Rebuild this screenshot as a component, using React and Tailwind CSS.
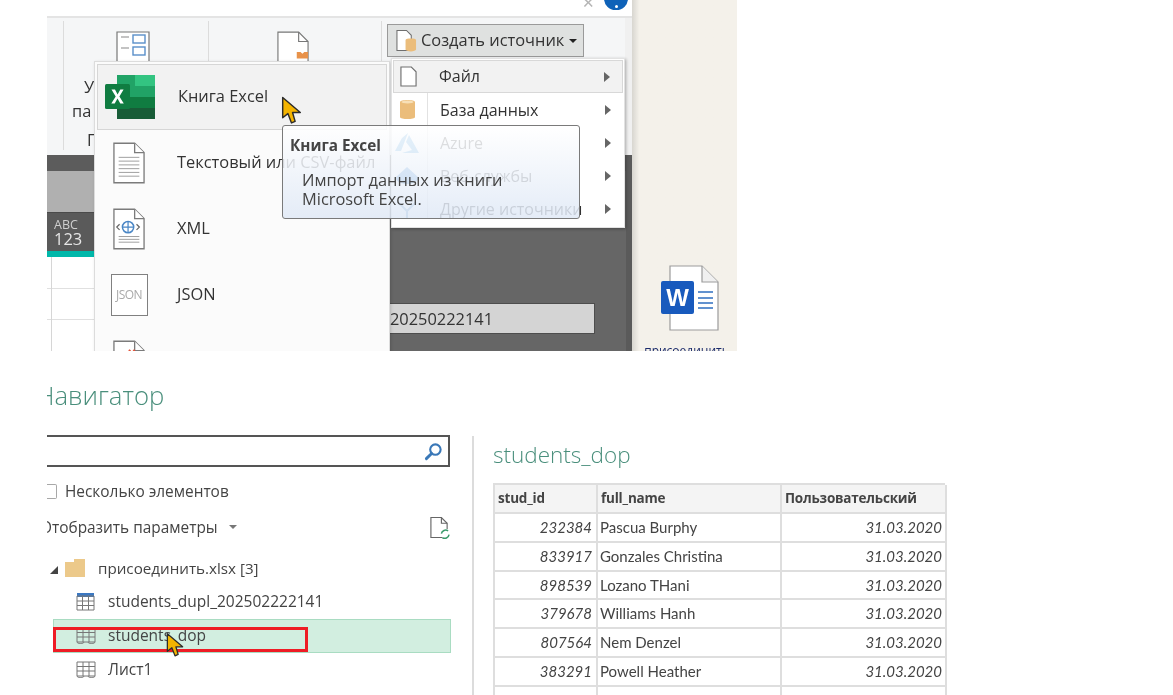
import React from "react";

const UI = "font-['Open_Sans',sans-serif]";

const FILE_ROWS = [
  { label: "Книга Excel", icon: "excel", active: true },
  { label: "Текстовый или CSV-файл", icon: "text" },
  { label: "XML", icon: "xml" },
  { label: "JSON", icon: "json" },
  { label: "PDF", icon: "pdf" },
];

const SOURCE_ROWS = [
  { label: "Файл", icon: "file", active: true },
  { label: "База данных", icon: "db" },
  { label: "Azure", icon: "azure" },
  { label: "Веб-службы", icon: "web" },
  { label: "Другие источники", icon: "other" },
];

const STUDENTS = [
  ["232384", "Pascua Burphy"],
  ["833917", "Gonzales Christina"],
  ["898539", "Lozano THani"],
  ["379678", "Williams Hanh"],
  ["807564", "Nem Denzel"],
  ["383291", "Powell Heather"],
  ["353974", "Burnett Alexa"],
];

const Cursor = ({ className }) => (
  <svg viewBox="0 0 20 28" className={className}>
    <path d="M1.5 1.5 L1.5 21 L6.5 17 L10 26 L13.5 24.5 L11 16 L18.5 16 Z" fill="#f4b400" stroke="#2b2b2b" strokeWidth="1.4" strokeLinejoin="round" />
  </svg>
);

const PageIcon = ({ className, children }) => (
  <svg viewBox="0 0 34 44" className={className}>
    <path d="M1 1 H23 L33 11 V43 H1 Z" fill="#fff" stroke="#7b7b7b" strokeWidth="1.4" />
    <path d="M23 1 V11 H33" fill="#fff" stroke="#7b7b7b" strokeWidth="1.4" />
    {children}
  </svg>
);

const ExcelIcon = () => (
  <svg viewBox="0 0 50 44" className="w-[50px] h-[44px]">
    <rect x="12" y="0" width="38" height="11" fill="#33c481" />
    <rect x="12" y="0" width="18" height="11" fill="#21a366" />
    <rect x="12" y="11" width="38" height="11" fill="#21a366" />
    <rect x="12" y="22" width="38" height="11" fill="#107c41" />
    <rect x="12" y="33" width="38" height="11" fill="#185c37" />
    <rect x="0" y="9" width="25" height="25" rx="1.5" fill="#107c41" />
    <path d="M6.5 14.5 H10 L12.6 19.4 L15.3 14.5 H18.6 L14.4 21.5 L18.8 28.5 H15.3 L12.5 23.5 L9.7 28.5 H6.3 L10.7 21.5 Z" fill="#fff" />
  </svg>
);

const FileMenuIcon = ({ type }) => {
  if (type === "excel") return <ExcelIcon />;
  if (type === "text") {
    return (
      <PageIcon className="w-[32px] h-[42px]">
        {[16, 20, 24, 28, 32, 36].map((y) => (
          <path key={y} d="M6 0 H28" transform={`translate(0 ${y})`} stroke="#9a9a9a" strokeWidth="1" />
        ))}
      </PageIcon>
    );
  }
  if (type === "xml") {
    return (
      <PageIcon className="w-[32px] h-[42px]">
        <circle cx="16" cy="20" r="6" fill="none" stroke="#4a86c5" strokeWidth="1.6" />
        <path d="M10 20 H22 M16 14 V26" stroke="#4a86c5" strokeWidth="1.3" />
        <path d="M7 17 L4 20 L7 23 M25 17 L28 20 L25 23" fill="none" stroke="#666" strokeWidth="1.3" />
        <path d="M6 30 H28 M6 33 H28 M6 36 H28" stroke="#9a9a9a" strokeWidth="1" />
      </PageIcon>
    );
  }
  if (type === "json") {
    return (
      <div className="w-[37px] h-[42px] border border-[#808080] bg-white flex items-center justify-center text-[12px] text-[#a9a9a9] font-['Open_Sans',sans-serif] tracking-tighter">
        JSON
      </div>
    );
  }
  return (
    <PageIcon className="w-[32px] h-[42px]">
      <path d="M17 10 L23 18 M23 10 L17 18" stroke="#e2543a" strokeWidth="2" />
    </PageIcon>
  );
};

const SourceIcon = ({ type }) => {
  if (type === "file") {
    return (
      <svg viewBox="0 0 18 22" className="w-[17px] h-[21px]">
        <path d="M1 1 H12 L17 6 V21 H1 Z" fill="#fff" stroke="#6f6f6f" strokeWidth="1.2" />
      </svg>
    );
  }
  if (type === "db") {
    return (
      <svg viewBox="0 0 16 22" className="w-[15px] h-[21px]">
        <path d="M0 3 C0 0 16 0 16 3 V19 C16 22 0 22 0 19 Z" fill="#ebbd7b" />
        <ellipse cx="8" cy="3" rx="6.5" ry="1.6" fill="#f7e0b8" />
      </svg>
    );
  }
  if (type === "azure") {
    return (
      <svg viewBox="0 0 24 20" className="w-[24px] h-[20px]">
        <path d="M13 0 L7 5 L0 18 H6 Z M14 2 L24 20 H7 L17 17 L11 9 Z" fill="#5aa7e0" />
      </svg>
    );
  }
  if (type === "web") {
    return (
      <svg viewBox="0 0 24 20" className="w-[24px] h-[20px]">
        <path d="M12 1 L24 12 C20 20 4 20 0 12 Z" fill="#4a90d9" />
      </svg>
    );
  }
  return (
    <svg viewBox="0 0 24 20" className="w-[24px] h-[20px]">
      <path d="M3 3 L12 12 L21 3 M12 12 V20" fill="none" stroke="#7aa7d0" strokeWidth="2" />
    </svg>
  );
};

const SheetIcon = ({ blue }) => (
  <svg viewBox="0 0 20 18" className="w-[20px] h-[18px]">
    {blue && <rect x="1" y="0" width="17" height="4" fill="#3b78c2" />}
    <path
      d={blue ? "M1 3 H18 V17 H1 Z M1 8 H18 M1 12.5 H18 M6.5 3 V17 M12.5 3 V17" : "M1 1 H19 V15 H1 Z M1 5.5 H19 M1 10 H19 M7 1 V15 M13 1 V15 M1 15 C1 17 8 17 8 15 M12 15 C12 17 19 17 19 15"}
      fill="none"
      stroke="#777"
      strokeWidth="1"
    />
  </svg>
);

const TopShot = () => (
  <div className={`relative flex h-[351px] w-[690px] ml-[47px] overflow-hidden ${UI}`}>
    {/* Excel window */}
    <div className="relative flex flex-col w-[585px] shrink-0 bg-[#666666]">
      <div className="relative h-[18px] shrink-0 bg-white border-b-2 border-[#e4e4e4]">
        <span className="absolute left-[535px] top-[-9px] text-[15px] text-[#b5b5b5]">✕</span>
        <div className="absolute left-[557px] top-[-13px] w-[24px] h-[23px] rounded-full bg-[#0f62b8] flex items-end justify-center pb-[2px]">
          <span className="w-[3px] h-[3px] bg-white rounded-full" />
        </div>
      </div>
      <div className="relative flex h-[137px] shrink-0 bg-[#f5f6f7] text-[16.4px] text-[#333]">
        <div className="w-[16px] shrink-0" />
        <div className="w-[145px] shrink-0 mt-[3px] mb-[5px] border-l border-[#dcdcdc] pt-[10px] pl-[52px]">
          <svg viewBox="0 0 34 40" className="w-[34px] h-[40px]">
            <path d="M1 1 H33 V40 H1 Z" fill="#fff" stroke="#777" strokeWidth="1.2" />
            <path d="M5 6 H13 M5 17 H13" stroke="#888" strokeWidth="1.2" />
            <rect x="17" y="4" width="12" height="8" fill="none" stroke="#5a8fc9" strokeWidth="1.4" />
            <rect x="17" y="16" width="12" height="8" fill="none" stroke="#5a8fc9" strokeWidth="1.4" />
          </svg>
          <div className="ml-[-32px] mt-[4px] leading-[24px]">У</div>
          <div className="ml-[-44px] leading-[24px]">па</div>
          <div className="ml-[-29px] mt-[5px] leading-[24px]">Г</div>
        </div>
        <div className="w-[173px] shrink-0 mt-[3px] mb-[5px] border-l border-[#dcdcdc] pt-[10px] pl-[68px]">
          <svg viewBox="0 0 34 40" className="w-[32px] h-[38px]">
            <path d="M1 1 H23 L33 11 V40 H1 Z" fill="#fff" stroke="#777" strokeWidth="1.2" />
            <path d="M23 1 V11 H33" fill="none" stroke="#777" strokeWidth="1.2" />
            <path d="M21 22 H25 L27 24 L29 22 H33 V29 H21 Z" fill="#e8924a" />
          </svg>
        </div>
        <div className="flex-1 mt-[3px] mb-[5px] border-l border-[#dcdcdc] pt-[3px] pl-[5px]">
          <div className="flex items-center w-[197px] h-[33px] bg-[#dfe1e0] border border-[#9a9a9a] pl-[8px] text-[16.4px] text-[#333]">
            <svg viewBox="0 0 22 24" className="w-[21px] h-[24px] shrink-0">
              <path d="M1 1 H11 L16 6 V22 H1 Z" fill="#fff" stroke="#6f6f6f" strokeWidth="1.1" />
              <path d="M10 11 C10 9 21 9 21 11 V21 C21 23.5 10 23.5 10 21 Z" fill="#ebbd7b" />
            </svg>
            <span className="ml-[4px] whitespace-nowrap">Создать источник</span>
            <span className="ml-[5px] w-0 h-0 border-x-[4px] border-x-transparent border-t-[4px] border-t-[#222]" />
          </div>
        </div>
        <div className="absolute right-0 top-0 bottom-0 w-[7px] bg-[#f0f0f0]" />
      </div>
      <div className="flex flex-col flex-1">
        <div className="h-[16px] bg-[#5c5c5c]" />
        <div className="w-[48px] h-[41px] bg-[#b0b0b0]" />
        <div className="w-[48px] h-[39px] bg-[#5a5a5a] border-t border-[#4a4a4a] pt-[5px] pl-[7px] text-[#e6e6e6] leading-[14px]">
          <div className="text-[12.5px] text-[#cfcfcf]">ABC</div>
          <div className="text-[16.5px]">123</div>
        </div>
        <div className="w-[48px] h-[6px] bg-[#01b8aa]" />
        <div className="relative w-[48px] flex-1 bg-white">
          <div className="h-[32px] border-b border-[#e0e0e0]" />
          <div className="h-[31px] border-b border-[#e0e0e0]" />
          <div className="absolute inset-y-0 left-[4px] w-px bg-[#d6d6d6]" />
        </div>
      </div>
      <div className="absolute right-0 top-[155px] bottom-0 w-[6px] bg-[#5a5a5a]" />
    </div>
    {/* desktop behind the window */}
    <div className="relative flex-1 flex flex-col items-center bg-gradient-to-r from-[#d8d6d0] from-0% to-[#f4f1ea] to-[7%] pt-[265px]">
      <div className="relative w-[58px] h-[66px] ml-[11px] shrink-0">
        <svg viewBox="0 0 50 66" className="absolute right-0 top-0 w-[50px] h-[66px]">
          <path d="M1 1 H33 L49 17 V65 H1 Z" fill="#fff" stroke="#9b9b9b" strokeWidth="1.2" />
          <path d="M33 1 V17 H49" fill="#f0f0f0" stroke="#9b9b9b" strokeWidth="1.2" />
          <path d="M29 27 H44 M29 33 H44 M29 38 H44 M29 43 H44" stroke="#2f6fc0" strokeWidth="1.6" />
        </svg>
        <div className="absolute left-0 top-[16px] w-[33px] h-[33px] rounded-[2px] bg-[#185abd] flex items-center justify-center text-white font-bold text-[24px] font-['Liberation_Sans',sans-serif]">
          W
        </div>
      </div>
      <div className="mt-[13px] ml-[4px] shrink-0 text-[12px] leading-[14px] text-[#1a2a6a] whitespace-nowrap">присоединить</div>
    </div>

    {/* source name field, runs under the file menu */}
    <div className="absolute left-[320px] top-[303px] w-[228px] h-[31px] bg-[#d4d4d4] border border-[#4d4d4d] pl-[22px] text-[16.4px] leading-[30px] text-[#333]">
      20250222141
    </div>

    {/* Получить данные: file menu */}
    <div className="absolute left-[47px] top-[61px] w-[296px] h-[300px] bg-[#fbfbfb] border border-[#dcdcdc] p-[2px] shadow-[1px_1px_3px_rgba(0,0,0,0.15)]">
      {FILE_ROWS.map((row) => (
        <div
          key={row.label}
          className={`flex items-center h-[66px] text-[16.4px] text-[#333] ${row.active ? "bg-[#f2f2f2] border border-[#d6d6d6]" : ""}`}
        >
          <div className="w-[64px] shrink-0 flex justify-center">
            <FileMenuIcon type={row.icon} />
          </div>
          <span className="ml-[16px] mb-[2px] whitespace-nowrap">{row.label}</span>
        </div>
      ))}
    </div>

    {/* Создать источник: source menu */}
    <div className="absolute left-[344px] top-[58px] w-[234px] h-[170px] bg-white border border-[#e2e2e2] p-[1px] shadow-[1px_1px_3px_rgba(0,0,0,0.3)]">
      <div className="absolute left-[35px] top-[34px] bottom-[8px] w-px bg-[#e2e2e2]" />
      {SOURCE_ROWS.map((row) => (
        <div
          key={row.label}
          className={`flex items-center h-[33px] text-[16px] text-[#333] ${row.active ? "bg-[#f2f2f2] border border-[#d8d8d8]" : ""}`}
        >
          <div className="w-[28px] shrink-0 flex justify-center">
            <SourceIcon type={row.icon} />
          </div>
          <span className={`flex-1 whitespace-nowrap ${row.active ? "ml-[17px] mb-[2px]" : "ml-[19px]"}`}>{row.label}</span>
          <span className="mr-[12px] w-0 h-0 border-y-[5px] border-y-transparent border-l-[6px] border-l-[#666]" />
        </div>
      ))}
    </div>

    {/* tooltip */}
    <div className="absolute left-[235px] top-[125px] w-[298px] h-[94px] rounded-[3px] border border-[#7a7a7a] bg-gradient-to-b from-white/85 to-[#e0e9f6]/85 px-[7px] pt-[10px] text-[16.4px] text-[#444] leading-[19px]">
      <div className="font-bold text-[15.3px]">Книга Excel</div>
      <div className="ml-[12px] mt-[15px]">
        Импорт данных из книги
        <br />
        Microsoft Excel.
      </div>
    </div>

    <Cursor className="absolute left-[234px] top-[96px] w-[21px] h-[29px]" />
  </div>
);

const Navigator = () => (
  <div className="w-[425px] shrink-0 flex flex-col overflow-hidden">
    <div className="h-[57px] text-[25.7px] font-light leading-[34px] pt-[1px] text-[#4a8f7c] ml-[-11px] whitespace-nowrap">Навигатор</div>
    <div className="flex items-center justify-end w-[403px] h-[32px] border-y-2 border-r-2 border-[#555] pr-[5px] shrink-0">
      <svg viewBox="0 0 20 20" className="w-[19px] h-[19px]">
        <circle cx="12" cy="8" r="5.5" fill="none" stroke="#3a78b8" strokeWidth="2.2" />
        <path d="M8 12 L2.5 17.5" stroke="#3a78b8" strokeWidth="3" strokeLinecap="round" />
      </svg>
    </div>
    <div className="flex items-center h-[17px] mt-[16px] shrink-0 text-[15.4px] text-[#444]">
      <div className="w-[10px] h-[15px] border-y border-r border-[#a8a8a8] rounded-r-[2px]" />
      <span className="ml-[8px]">Несколько элементов</span>
    </div>
    <div className="flex items-center w-[403px] h-[24px] mt-[16px] shrink-0 text-[15.4px] text-[#444]">
      <span className="ml-[-7px] whitespace-nowrap">Отобразить параметры</span>
      <span className="ml-[11px] mb-[3px] w-0 h-0 border-x-[4px] border-x-transparent border-t-[4px] border-t-[#777]" />
      <svg viewBox="0 0 22 24" className="ml-auto w-[21px] h-[24px]">
        <path d="M14 22 H2 V1 H13 L19 7 V13" fill="none" stroke="#666" strokeWidth="1.2" />
        <path d="M13 1 V7 H19" fill="none" stroke="#666" strokeWidth="1.2" />
        <path d="M13 18 A4.5 4.5 0 0 1 20 15 M21 19 A4.5 4.5 0 0 1 14 22" fill="none" stroke="#3a9a6a" strokeWidth="1.6" />
      </svg>
    </div>
    <div className="flex items-center h-[34px] mt-[11px] shrink-0 text-[15.2px] text-[#444]">
      <span className="ml-[3px] mt-[4px] w-0 h-0 border-l-[8px] border-l-transparent border-b-[8px] border-b-[#444]" />
      <svg viewBox="0 0 21 18" className="ml-[7px] w-[21px] h-[18px]">
        <path d="M0 3 H9 V0 H20 V18 H0 Z" fill="#ecc98a" />
      </svg>
      <span className="ml-[12px] whitespace-nowrap">присоединить.xlsx [3]</span>
    </div>
    {[
      { label: "students_dupl_202502222141", blue: true },
      { label: "students_dop", selected: true },
      { label: "Лист1" },
    ].map((item) => (
      <div
        key={item.label}
        className={`relative flex items-center w-[398px] ml-[6px] h-[34px] shrink-0 text-[15.5px] text-[#444] ${item.selected ? "bg-[#d2eee0] border border-[#a9dcc2]" : "border border-transparent"}`}
      >
        <div className="ml-[22px] flex"><SheetIcon blue={item.blue} /></div>
        <span className="ml-[12px]">{item.label}</span>
        {item.selected && (
          <>
            <div className="absolute left-[-1px] top-[7px] w-[255px] h-[25px] border-[3px] border-[#ee1c25]" />
            <Cursor className="absolute left-[112px] top-[12px] w-[18px] h-[26px]" />
          </>
        )}
      </div>
    ))}
  </div>
);

const Preview = () => (
  <div className="ml-[19px] mt-[58px] flex flex-col">
    <div className="h-[47px] shrink-0 text-[22.5px] font-light leading-[38px] text-[#4a8f7c]">students_dop</div>
    <div className="w-[452px] grid grid-cols-[103px_184px_165px] border-l-2 border-t-2 border-[#dedede] font-['Lato',sans-serif] text-[15px] text-[#444]">
      {["stud_id", "full_name", "Пользовательский"].map((h) => (
        <div key={h} className="h-[29px] bg-[#f4f4f4] border-r-2 border-b-2 border-[#dedede] pl-[3px] font-bold leading-[26px] font-['Open_Sans',sans-serif] text-[13.5px] tracking-[-0.2px]">
          {h}
        </div>
      ))}
      {STUDENTS.map(([id, name]) => (
        <React.Fragment key={id}>
          <div className="h-[28.8px] border-r-2 border-b-2 border-[#dedede] pr-[4px] text-right italic leading-[27px]">{id}</div>
          <div className="h-[28.8px] border-r-2 border-b-2 border-[#dedede] pl-[2px] leading-[27px]">{name}</div>
          <div className="h-[28.8px] border-r-2 border-b-2 border-[#dedede] pr-[3px] text-right italic leading-[27px]">31.03.2020</div>
        </React.Fragment>
      ))}
    </div>
  </div>
);

export default function App() {
  return (
    <div className="relative w-[1173px] h-[695px] overflow-hidden bg-white blur-[0.35px]">
      <TopShot />
      <div className={`flex h-[317px] ml-[47px] mt-[27px] overflow-hidden ${UI}`}>
        <Navigator />
        <div className="w-[2px] mt-[58px] bg-[#dcdcdc] shrink-0" />
        <Preview />
      </div>
    </div>
  );
}
